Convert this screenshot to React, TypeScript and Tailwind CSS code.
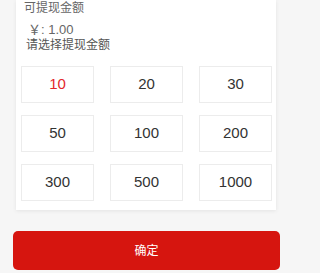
import React, { useState } from 'react';

const amounts = [10, 20, 30, 50, 100, 200, 300, 500, 1000];

export default function App() {
  const [selected, setSelected] = useState(10);

  return (
    <div className="w-full h-[273px] overflow-hidden bg-[#f6f6f6] font-['Liberation_Sans','Noto_Sans_CJK_SC',sans-serif]">
      {/* 提现卡片 */}
      <div className="ml-[16px] w-[260px] bg-white pl-[5px] pr-[4px] pb-[9px] shadow-[0_1px_4px_rgba(0,0,0,0.08)]">
        <div className="pl-[3px] text-[12px] leading-[17px] text-[#666]">可提现金额</div>
        <div className="mt-[4px] pl-[7px] text-[13px] leading-[17px] text-[#666]">￥: 1.00</div>
        <div className="pl-[5px] text-[12px] leading-[14px] text-[#555]">请选择提现金额</div>

        <div className="mt-[14px] grid grid-cols-3 gap-x-[16px] gap-y-[12px]">
          {amounts.map((a) => (
            <button
              key={a}
              onClick={() => setSelected(a)}
              className={`h-[37px] border border-[#ececec] bg-white text-[15px] ${
                selected === a ? 'text-[#e3262b]' : 'text-[#333]'
              }`}
            >
              {a}
            </button>
          ))}
        </div>
      </div>

      {/* 确定 */}
      <button className="mt-[21px] ml-[13px] w-[267px] h-[39px] rounded-[5px] bg-[#d6150f] text-[12px] text-white">
        确定
      </button>
    </div>
  );
}
